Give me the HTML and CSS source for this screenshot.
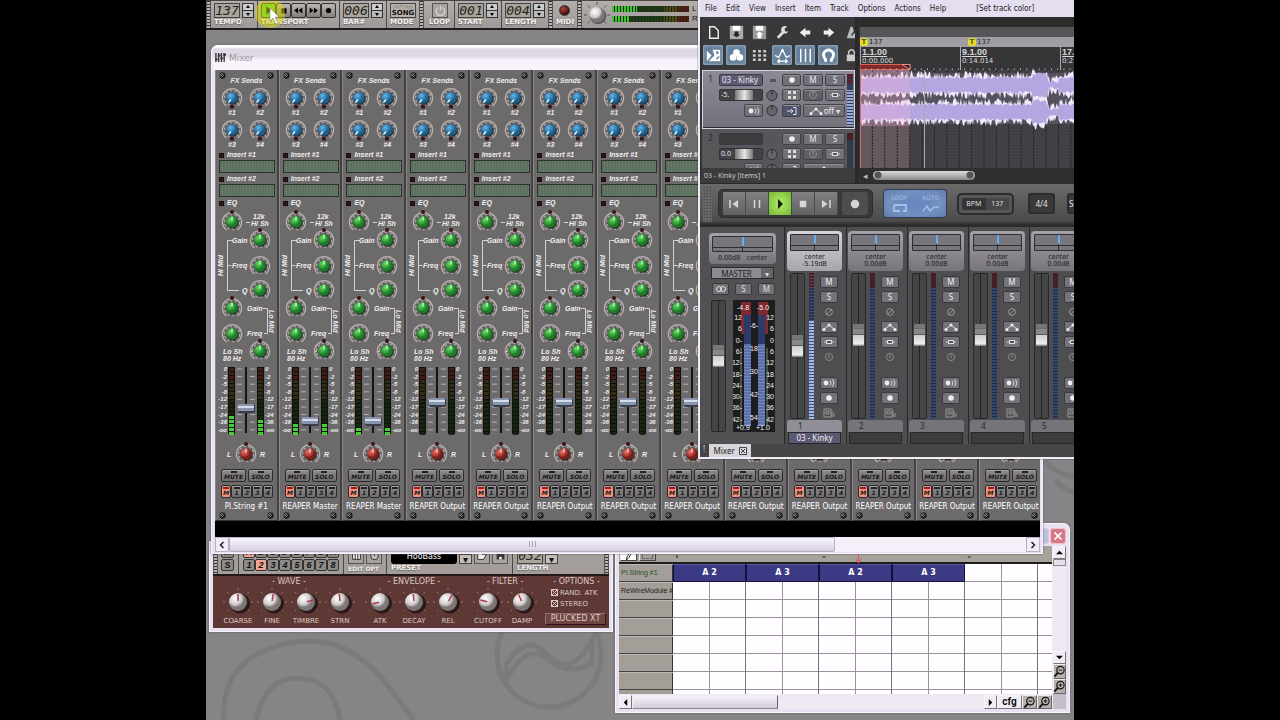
FILE: index.html
```html
<!DOCTYPE html>
<html lang="en">
<head>
<meta charset="utf-8">
<title>Mixer</title>
<link rel="stylesheet" href="styles.css">
</head>
<body>
<svg class="defs" aria-hidden="true">
  <defs>
    <radialGradient id="gBlue" cx="35%" cy="30%"><stop offset="0" stop-color="#6ab4e0"/><stop offset=".7" stop-color="#2f80b4"/><stop offset="1" stop-color="#1f5f8c"/></radialGradient>
    <radialGradient id="gGreen" cx="35%" cy="30%"><stop offset="0" stop-color="#68d868"/><stop offset=".7" stop-color="#2da336"/><stop offset="1" stop-color="#1d7a28"/></radialGradient>
    <radialGradient id="gRed" cx="35%" cy="30%"><stop offset="0" stop-color="#e07a70"/><stop offset=".7" stop-color="#b23a34"/><stop offset="1" stop-color="#7c201c"/></radialGradient>
    <radialGradient id="gWhite" cx="35%" cy="30%"><stop offset="0" stop-color="#fff"/><stop offset=".7" stop-color="#cfcccc"/><stop offset="1" stop-color="#7c7676"/></radialGradient>
    <symbol id="ring" viewBox="0 0 22 22" overflow="visible">
      <path d="M5.500 19A9.600 9.600 0 1 1 16.500 19" fill="none" stroke="#b9b2ae" stroke-width="1.300"/>
      <circle cx="11" cy="11" r="7.300" fill="#5a5757"/>
      <circle cx="11" cy="11" r="7.500" fill="none" stroke="#a5a09d" stroke-width="1.500" stroke-dasharray="2.500 2.200"/>
      <circle cx="12" cy="12" r="5.600" fill="#2a2a2a"/>
    </symbol>
    <symbol id="k-blue" viewBox="0 0 22 22"><use href="#ring"/><circle cx="11" cy="11" r="5.800" fill="url(#gBlue)"/><path d="M10 12.500l-2.500 3" stroke="#fff" stroke-width="1.300"/><rect x="9" y="18" width="4" height="3.500" rx="1" fill="#3c1413"/></symbol>
    <symbol id="k-green" viewBox="0 0 22 22"><use href="#ring"/><circle cx="11" cy="11" r="5.800" fill="url(#gGreen)"/><path d="M11 9.500V5.500" stroke="#dfffdc" stroke-width="1.200"/></symbol>
    <symbol id="k-red" viewBox="0 0 22 22"><use href="#ring"/><circle cx="11" cy="11" r="5.800" fill="url(#gRed)"/><path d="M11 9.500V5.500" stroke="#ffe4dc" stroke-width="1.200"/></symbol>
    <symbol id="screw" viewBox="0 0 8 8"><circle cx="4" cy="4" r="3.600" fill="#1c1c1c"/><circle cx="3.500" cy="3.500" r="2.200" fill="#8e8a88"/><path d="M2 2l4 4M6 2L2.500 5.500" stroke="#111"/></symbol>
    <symbol id="k-white" viewBox="0 0 32 28"><g stroke="#9c7a72"><path d="M16 1v2M5 5l1.500 1.500M27 5l-1.500 1.500M1 15h2M29 15h2M5 24l1-1M27 24l-1-1"/></g><circle cx="18" cy="16.500" r="10" fill="#2b1917"/><circle cx="16" cy="15" r="9" fill="url(#gWhite)"/></symbol>
    <symbol id="mag-out" viewBox="0 0 14 14"><circle cx="8" cy="5.500" r="4" fill="none" stroke="#111" stroke-width="1.200"/><path d="M5 8.500L1.500 12.500" stroke="#111" stroke-width="2"/><path d="M6 5.500h4" stroke="#111"/></symbol>
    <symbol id="mag-in" viewBox="0 0 14 14"><use href="#mag-out"/><path d="M8 3.500v4" stroke="#111"/></symbol>
    <symbol id="env" viewBox="0 0 16 10"><path d="M2.500 7.500L8 3l5.500 4.500" fill="none" stroke="#ddd" stroke-width="1"/><circle cx="3" cy="7.500" r="1.500" fill="#eee"/><circle cx="8" cy="3" r="1.500" fill="#eee"/><circle cx="13" cy="7.500" r="1.500" fill="#eee"/></symbol>
    <symbol id="io" viewBox="0 0 16 10"><path d="M3 5h10" stroke="#ccc"/><rect x="5.500" y="3.500" width="5" height="3" fill="#555" stroke="#ddd"/></symbol>
    <symbol id="input" viewBox="0 0 16 10"><path d="M3 5h6M7 3l2 2-2 2M9 1.500h3v7H9" fill="none" stroke="#dde"/></symbol>
    <symbol id="rec" viewBox="0 0 16 10"><circle cx="8" cy="5" r="2.800" fill="#eee"/></symbol>
    <symbol id="mon" viewBox="0 0 16 10"><circle cx="5" cy="5" r="2.400" fill="#eee"/><path d="M9 2.500q2 2.500 0 5M11.500 1.500q3 3.500 0 7" fill="none" stroke="#ddd"/></symbol>
    <symbol id="fx" viewBox="0 0 16 10"><g fill="#ddd"><rect x="4" y="1" width="3" height="3"/><rect x="9" y="1" width="3" height="3"/><rect x="4" y="6" width="3" height="3"/><rect x="9" y="6" width="3" height="3"/></g></symbol>
    <symbol id="power" viewBox="0 0 16 10"><circle cx="8" cy="5" r="3.600" fill="none" stroke="#8a8a8a"/><path d="M8 2.500v4" stroke="#8a8a8a"/></symbol>
    <symbol id="phase" viewBox="0 0 16 10"><circle cx="8" cy="5" r="3.400" fill="none" stroke="#999"/><path d="M5 8l6-6" stroke="#999"/></symbol>
    <symbol id="route" viewBox="0 0 16 10"><path d="M3 1h7v8H3zM5 3h3v3H5zM11 3v6M13 5v4" fill="none" stroke="#999"/></symbol>
    <symbol id="pot" viewBox="0 0 14 14"><circle cx="7" cy="7" r="5.500" fill="#666369" stroke="#2c2c2f"/><path d="M7 6V2.500" stroke="#222"/></symbol>
  </defs>
</svg>

<main class="desktop">
  <svg class="wallpaper" viewBox="0 0 868 720" preserveAspectRatio="xMinYMin slice" aria-hidden="true">
    <g fill="none" stroke="#747475" stroke-width="5" opacity=".55"><circle cx="343" cy="655" r="52"/><path d="M300 665q20-34 42-10t44-14v22q-22 14-44-4t-42 22zM18 720q-4-60 60-76t110 50l20 26M50 720q10-44 44-42t40 42M836 460q30 25 40 10M850 480q10 16 30 10"/></g>
  </svg>

  <header class="rack">
    <i class="ridge"></i>
    <div class="unit"><div class="line"><output class="lcd">137</output><button class="spin" aria-label="Tempo step"></button></div><span>TEMPO</span></div>
    <i class="sep"></i>
    <div class="unit">
      <div class="line keys">
        <button class="on" aria-label="Play"><svg viewBox="0 0 15 15"><path d="M5 3l6 4.500L5 12z"/></svg></button>
        <button class="near" aria-label="Stop"><svg viewBox="0 0 15 15"><path d="M5 5h6v6H5z"/></svg></button>
        <button aria-label="Rewind"><svg viewBox="0 0 15 15"><path d="M7 4v7L2.500 7.500zM12 4v7L7.500 7.500z"/></svg></button>
        <button aria-label="Forward"><svg viewBox="0 0 15 15"><path d="M3 4v7l4.500-3.500zM8 4v7l4.500-3.500z"/></svg></button>
        <button aria-label="Record"><svg viewBox="0 0 15 15"><circle cx="7.500" cy="7.500" r="3"/></svg></button>
      </div><span>TRANSPORT</span>
      <svg class="halo" viewBox="0 0 34 34" aria-hidden="true"><circle cx="15" cy="15" r="15" fill="#d8dc00" opacity=".5"/><path d="M15 10v13l3-3 3 6 2-1-3-6h4z" fill="#fff" stroke="#777" stroke-width=".5"/></svg>
    </div>
    <i class="sep"></i>
    <div class="unit"><div class="line"><output class="lcd">006</output><button class="spin" aria-label="Bar step"></button></div><span>BAR#</span></div>
    <i class="sep"></i>
    <div class="unit"><div class="line"><button class="mode"><em>PATTRN</em>SONG</button></div><span>MODE</span></div>
    <i class="ridge"></i>
    <div class="unit loop"><div class="line"><button class="square" aria-label="Loop"><svg viewBox="0 0 15 15"><path d="M5 4a5 5 0 1 0 5 0M7.500 2v5" fill="none" stroke="#d8d2cc" stroke-width="1.500"/></svg></button></div><span>LOOP</span></div>
    <i class="sep"></i>
    <div class="unit"><div class="line"><output class="lcd">001</output><button class="spin" aria-label="Start step"></button></div><span>START</span></div>
    <i class="sep"></i>
    <div class="unit"><div class="line"><output class="lcd">004</output><button class="spin" aria-label="Length step"></button></div><span>LENGTH</span></div>
    <i class="ridge"></i>
    <div class="unit midi"><div class="line"><i class="led"></i></div><span>MIDI</span></div>
    <i class="ridge"></i>
    <svg class="gain" viewBox="0 0 28 26"><g stroke="#444"><path d="M14 0v3M4 4l2 2M24 4l-2 2M0 14h3M25 14h3M4 23l2-2M24 23l-2-2"/></g><circle cx="15" cy="15" r="9" fill="#555"/><circle cx="14" cy="14" r="8.500" fill="url(#gWhite)"/></svg>
    <div class="vu"><div><i class="bar left"></i>L</div><div><i class="bar right"></i>R</div></div>
    <i class="ridge"></i>
  </header>

  <section class="win plucked" aria-label="Plucked XT">
    <div class="bank">
      <i class="ridge"></i>
      <div class="pads solo"><button>M</button><button>S</button></div>
      <i class="sep"></i>
      <div class="pads"><button class="hot">A</button><button>B</button><button>C</button><button>D</button><button>E</button><button>F</button><button>G</button><button>H</button><button>1</button><button class="hot">2</button><button>3</button><button>4</button><button>5</button><button>6</button><button>7</button><button>8</button></div>
      <i class="sep"></i>
      <div class="unit"><div class="line"><button class="square" aria-label="Edit"><svg viewBox="0 0 15 15"><path d="M3 3h9v9H3zM6 3v9M9 3v9" fill="#eee" stroke="#222"/></svg></button><button class="square" aria-label="Options"><svg viewBox="0 0 15 15"><circle cx="7.500" cy="8" r="4.500" fill="#bbb" stroke="#222"/><path d="M7.500 8V4" stroke="#222"/></svg></button></div><span class="small">EDIT OPT</span></div>
      <i class="sep"></i>
      <div class="unit preset"><div class="line"><output class="screen">HooBass</output><button class="drop" aria-label="Preset list">▾</button><button class="square" aria-label="Open"><svg viewBox="0 0 15 15"><path d="M2 12V4h4l1 2h5l-3 6z" fill="#eee" stroke="#222"/></svg></button><button class="square" aria-label="Save"><svg viewBox="0 0 15 15"><path d="M3 3h9v9H3z" fill="#333"/><path d="M6 9h3v3H6z" fill="#eee"/></svg></button></div><span>PRESET</span></div>
      <i class="sep"></i>
      <div class="unit"><div class="line"><output class="lcd">032</output><button class="drop" aria-label="Length list">▾</button></div><span>LENGTH</span></div>
      <i class="ridge end"></i>
    </div>
    <div class="synth">
      <fieldset><legend>- WAVE -</legend><div data-knobs="COARSE:0,FINE:8,TIMBRE:75,STRN:-5"></div></fieldset>
      <fieldset><legend>- ENVELOPE -</legend><div data-knobs="ATK:-105,DECAY:-5,REL:30"></div></fieldset>
      <fieldset><legend>- FILTER -</legend><div data-knobs="CUTOFF:-75,DAMP:-25"></div></fieldset>
      <fieldset class="opts"><legend>- OPTIONS -</legend>
        <label><input type="checkbox" checked>RAND. ATK</label>
        <label><input type="checkbox" checked>STEREO</label>
        <button>PLUCKED XT</button>
      </fieldset>
    </div>
  </section>

  <section class="win pattern" aria-label="Playlist">
    <div class="caption"><button class="min" aria-label="Maximize"></button><button class="close" aria-label="Close"><svg viewBox="0 0 16 16"><path d="M4 4l8 8M12 4l-8 8" stroke="#fff" stroke-width="2"/></svg></button></div>
    <div class="sheet">
      <div class="area">
        <div class="ruler"><button class="pen" aria-label="Draw"><svg viewBox="0 0 15 15"><path d="M5 14l1-4 4-7 2 1-4 7z" fill="none" stroke="#111"/></svg></button><button class="sel" aria-label="Select"></button><svg class="marks" viewBox="0 0 378 17" preserveAspectRatio="xMinYMin slice"><path d="M4 9v3M149 11h3M294 11h3" stroke="#222"/><path d="M185 6v11M182 13l3 4 3-4" fill="none" stroke="#e0565c"/></svg></div>
        <div class="rows">
          <div class="names"><span class="green">PI.String #1</span><span>ReWireModule #1</span><span></span><span></span><span></span><span></span><span></span></div>
          <div class="cells"><button>A 2</button><button>A 3</button><button>A 2</button><button>A 3</button></div>
        </div>
        <div class="hbar"><button aria-label="Scroll left"><svg viewBox="0 0 8 8"><path d="M6 0v8L2 4z"/></svg></button><i class="thumb"></i><i class="track"></i><button aria-label="Scroll right"><svg viewBox="0 0 8 8"><path d="M2 0v8l4-4z"/></svg></button><button class="cfg">cfg</button><button class="zoom" aria-label="Zoom out"><svg><use href="#mag-out"/></svg></button><button class="zoom" aria-label="Zoom in"><svg><use href="#mag-in"/></svg></button></div>
      </div>
      <div class="vbar"><button aria-label="Scroll up"><svg viewBox="0 0 8 8"><path d="M0 6h8L4 2z"/></svg></button><i class="thumb"></i><i class="track"></i><button aria-label="Scroll down"><svg viewBox="0 0 8 8"><path d="M0 2h8L4 6z"/></svg></button><button class="zoom" aria-label="Zoom rows out"><svg><use href="#mag-out"/></svg></button><button class="zoom" aria-label="Zoom rows in"><svg><use href="#mag-in"/></svg></button><i class="corner"></i></div>
    </div>
  </section>

  <section class="win mixer" aria-label="Mixer">
    <h1><svg viewBox="0 0 12 12"><path d="M1 1v10M4 1v10M7 1v10M10 1v10" stroke="#333" stroke-width="1.500"/><path d="M0 8h3M3 4h3M6 7h3M9 3h3" stroke="#333" stroke-width="2"/></svg>Mixer</h1>
    <div class="board"><div class="strips" id="strips"></div></div>
    <div class="scroll"><button aria-label="Scroll left"><svg viewBox="0 0 8 8"><path d="M5.500 1L2.500 4l3 3" /></svg></button><i class="thumb"></i><i class="track"></i><button aria-label="Scroll right"><svg viewBox="0 0 8 8"><path d="M2.500 1l3 3-3 3"/></svg></button></div>
  </section>

  <section class="reaper" aria-label="Reaper">
    <nav class="menu"><a href="#">File</a><a href="#">Edit</a><a href="#">View</a><a href="#">Insert</a><a href="#">Item</a><a href="#">Track</a><a href="#">Options</a><a href="#">Actions</a><a href="#">Help</a><a href="#" class="hint">[Set track color]</a></nav>
    <div class="upper">
      <div class="tcp">
        <div class="tools">
          <button aria-label="New"><svg viewBox="0 0 20 20"><path d="M6 4h5l4 4v8H6z" fill="none" stroke="#eee" stroke-width="1.500"/></svg></button>
          <button aria-label="Open"><svg viewBox="0 0 20 20"><rect x="3" y="3" width="14" height="14" fill="#aaa"/><path d="M6 3h8v5H6z" fill="#fff"/><path d="M8 9h4v3h2l-4 3-4-3h2z" fill="#222"/></svg></button>
          <button aria-label="Save"><svg viewBox="0 0 20 20"><rect x="3" y="3" width="14" height="14" fill="#999"/><path d="M6 3h8v5H6z" fill="#fff"/><path d="M10 9l4 3h-2v4H8v-4H6z" fill="#fff"/></svg></button>
          <button aria-label="Settings"><svg viewBox="0 0 20 20"><path d="M5 15.500L11 9.500" stroke="#ddd" stroke-width="3"/><path d="M15 4a4 4 0 1 0 1 5l-3 0-1-3z" fill="#ddd"/></svg></button>
          <button aria-label="Undo"><svg viewBox="0 0 20 20"><path d="M4 10l6-5v3h5v4h-5v3z" fill="#eee"/></svg></button>
          <button aria-label="Redo"><svg viewBox="0 0 20 20"><path d="M16 10l-6-5v3H5v4h5v3z" fill="#eee"/></svg></button>
          <button aria-label="Metronome"><svg viewBox="0 0 20 20"><path d="M5 16L9 4h2l4 12z" fill="#bbb"/><path d="M10 13l6-8" stroke="#333" stroke-width="1.500"/></svg></button>
          <button class="lit" aria-label="Crossfade"><svg viewBox="0 0 20 20"><path d="M3 5l5 5-5 6zM9 4h8v12H5l6-6z" fill="#fff"/><circle cx="14" cy="7" r="1.500" fill="#66809a"/><path d="M13 14l3-3" stroke="#66809a" stroke-width="1.500"/></svg></button>
          <button class="lit" aria-label="Group"><svg viewBox="0 0 20 20"><circle cx="10" cy="7" r="3.500" fill="#fff"/><circle cx="6.500" cy="12" r="3.500" fill="#fff"/><circle cx="13.500" cy="12" r="3.500" fill="#fff"/></svg></button>
          <button aria-label="Grid"><svg viewBox="0 0 20 20"><path d="M3 5.500h14M3 10h14M3 14.500h14" stroke="#ccc" stroke-width="2.500" stroke-dasharray="3 2.500"/></svg></button>
          <button class="lit" aria-label="Envelope move"><svg viewBox="0 0 20 20"><path d="M2 10l4 2 4-8 4 8 4-2M5 16h10M7 14l-2 2 2 2M13 14l2 2-2 2" fill="none" stroke="#fff" stroke-width="1.300"/><circle cx="10" cy="5" r="1.500" fill="#fff"/></svg></button>
          <button class="lit" aria-label="Lines"><svg viewBox="0 0 20 20"><path d="M5 3v14M10 3v14M15 3v14" stroke="#fff" stroke-width="1.500"/></svg></button>
          <button class="lit" aria-label="Snap"><svg viewBox="0 0 20 20"><path d="M7 16.500V14.500Q3 9 6 6q4-3.500 8 0 3 3-1 8.500v2" fill="none" stroke="#fff" stroke-width="3"/></svg></button>
          <button aria-label="Lock"><svg viewBox="0 0 20 20"><rect x="5" y="9" width="10" height="7" fill="#ccc"/><path d="M7 9V6q3-4 6 0v3" fill="none" stroke="#ccc" stroke-width="1.500"/></svg></button>
        </div>
        <div class="tracks" id="tracks"></div>
        <p class="status">03 - Kinky [items] 1</p>
      </div>
      <div class="arrange">
        <div class="band"></div>
        <div class="tempo"><span><b>T</b>137</span><span><b>T</b>137</span></div>
        <div class="time"><div><strong>1.1.00</strong>0:00.000</div><div><strong>9.1.00</strong>0:14.014</div><div><strong>17.</strong>0:2</div><svg class="loopbar" viewBox="0 0 215 6"><path d="M0 .5h50v5H0z" fill="#7e2a28" stroke="#d8645c"/><path d="M42 .5h8v5z" fill="#222" stroke="#e88"/><path d="M5 5.500h210" stroke="#bbb" stroke-width="2" stroke-dasharray="1 5.200"/></svg></div>
        <svg class="wave" id="wave" viewBox="0 0 214 98" preserveAspectRatio="xMinYMin slice"></svg>
        <div class="slider"><span>◂</span><i></i></div>
      </div>
    </div>
    <div class="transport">
      <i class="grip"></i>
      <div class="deck">
        <div class="deckrow">
          <button aria-label="Start"><svg viewBox="0 0 20 20"><path d="M6 6v8"/><path class="solid" d="M14 6v8L8.500 10z"/></svg></button>
          <button aria-label="Pause"><svg viewBox="0 0 20 20"><path d="M7.500 6v8M12.500 6v8"/></svg></button>
          <button class="go" aria-label="Play"><svg viewBox="0 0 20 20"><path d="M8 5v10l5-5z"/></svg></button>
          <button aria-label="Stop"><svg viewBox="0 0 20 20"><path d="M7.500 7.500h5v5h-5z"/></svg></button>
          <button aria-label="End"><svg viewBox="0 0 20 20"><path d="M14 6v8"/><path class="solid" d="M6 6v8l5.500-4z"/></svg></button>
        </div>
        <button class="record" aria-label="Record"><svg viewBox="0 0 20 20"><circle cx="10" cy="10" r="3.500"/></svg></button>
      </div>
      <div class="auto"><button>LOOP<svg viewBox="0 0 20 10"><path d="M4 2h12v6h-3M10 8H4V2" fill="none" stroke="#a4bce6" stroke-width="2"/></svg></button><button>AUTO<svg viewBox="0 0 20 10"><path d="M2 8l4-5 3 5 4-4h5" fill="none" stroke="#a4bce6" stroke-width="1.500"/></svg></button></div>
      <div class="bpm"><span>BPM</span><output>137</output></div>
      <button class="sig">4/4</button>
      <button class="sig next">Se</button>
    </div>
    <div class="mcp">
      <div class="master">
        <div class="pan"><i></i><p><span>0.00dB</span><span>center</span></p></div>
        <div class="mname"><span>MASTER</span><button aria-label="Master menu">▾</button></div>
        <div class="mbtns"><button aria-label="Mono"><svg viewBox="0 0 16 10"><circle cx="6" cy="5" r="2.500"/><circle cx="10" cy="5" r="2.500"/></svg></button><button>S</button><button>M</button></div>
        <div class="mfade"><div class="slot"><i></i></div><svg id="mmeter" viewBox="0 0 42 132"></svg></div>
      </div>
      <div class="chans" id="chans"></div>
    </div>
    <div class="dock"><span>!</span><button>Mixer<svg viewBox="0 0 8 8"><path d="M.5.5h7v7h-7zM2 2l4 4M6 2L2 6" fill="none" stroke="#444"/></svg></button></div>
  </section>
</main>
<script src="app.js"></script>
</body>
</html>
```
FILE: styles.css
```css
*, *::before, *::after { box-sizing: border-box; }
body { margin: 0; background: #000; font: 8px/10px "Liberation Sans", Arial, sans-serif; color: #fff; }
button, input, output, fieldset, legend, h1, p { margin: 0; padding: 0; border: 0; font: inherit; color: inherit; }
button { display: flex; align-items: center; justify-content: center; background: none; }
svg { display: block; flex: none; }
.defs { position: absolute; width: 0; height: 0; }
.desktop { position: relative; max-width: 868px; height: 100vh; min-height: 720px; margin: 0 auto; overflow: hidden; background: #858486; }
.wallpaper { position: absolute; inset: 0; width: 100%; height: 100%; }
.win { position: absolute; background: #e9e1f1; box-shadow: inset 0 0 0 1px #f8f4fc, 0 0 2px #555; }

/* top rack */
.rack { position: relative; display: flex; gap: 2px; width: 493px; height: 30px; overflow: hidden; background: linear-gradient(#b3adab, #9e9896); border-bottom: 2px solid #1d1b1b; border-top: 1px solid #4a4646; }
.ridge { flex: none; width: 5px; background: repeating-linear-gradient(#333 0 1px, #b8b2b0 1px 3px); border: solid #555; border-width: 0 1px; }
.ridge.end { margin-left: auto; }
.sep { flex: none; width: 1px; background: #4b4746; }
.unit { position: relative; flex: none; padding: 2px 1px 0; font: bold 7px/9px "DejaVu Sans", sans-serif; color: #f4f0ee; text-shadow: 0 1px 1px #666; }
.line { display: flex; gap: 2px; height: 15px; }
.unit > span { display: block; white-space: nowrap; }
.lcd { width: 26px; text-align: center; font: italic 13px/14px "DejaVu Sans Mono", monospace; color: #24221f; background: #aaa49a; border: 1px solid #444; text-shadow: none; }
.spin { width: 12px; border: 1px solid #333; background: linear-gradient(#ccc 45%, #333 45% 55%, #bbb 55%); position: relative; }
.spin::before, .spin::after { content: ""; position: absolute; left: 3px; border: 2px solid transparent; }
.spin::before { top: -1px; border-bottom: 3px solid #000; }
.spin::after { bottom: -1px; border-top: 3px solid #000; }
.keys { gap: 0; }
.keys button { width: 15px; border: 1px solid #333; border-radius: 2px; background: linear-gradient(#bbb5b2, #85807e); }
.keys .on { background: #4ed43c; }
.keys svg { width: 13px; height: 13px; }
.halo { position: absolute; left: -5px; top: -3px; width: 34px; height: 34px; }
.mode { flex-direction: column; width: 26px; border: 1px solid #444; background: #b7b0a8; font: bold 7px/7px "DejaVu Sans", sans-serif; color: #111; text-shadow: none; }
.mode em { color: #8b857e; font: 5px/5px "DejaVu Sans", sans-serif; }
.square { width: 16px; border: 1px solid #555; background: #aaa29c; }
.square svg { width: 13px; height: 13px; }
.unit.loop .line { padding-left: 3px; }
.unit.loop { width: 24px; margin-left: 2px; }
.unit.midi { width: 20px; }
.led { width: 11px; height: 11px; margin: 2px 3px; border-radius: 50%; background: radial-gradient(circle at 35% 30%, #a44, #4a0c0c 70%); border: 1px solid #333; }
.gain { width: 26px; height: 26px; }
.vu { display: flex; flex-direction: column; gap: 4px; padding-top: 5px; margin-right: 2px; color: #222; font: 8px/6px "Liberation Sans", sans-serif; }
.vu div { display: flex; gap: 3px; }
.bar { width: 77px; height: 6px; background: repeating-linear-gradient(90deg, transparent 0 2px, #1a2a14 2px 3px), linear-gradient(90deg, #3cc32e 0 32%, #1e3a18 32% 68%, #4d4a16 68% 84%, #5a1a14 84%); }
.bar.right { background: repeating-linear-gradient(90deg, transparent 0 2px, #1a2a14 2px 3px), linear-gradient(90deg, #3cc32e 0 24%, #1e3a18 24% 68%, #4d4a16 68% 84%, #5a1a14 84%); }

/* orion mixer */
.mixer { left: 5px; right: 31px; top: 45px; padding: 0 3px 2px 4px; border-radius: 7px 7px 0 0; }
.mixer h1 { display: flex; align-items: center; gap: 3px; height: 25px; font: 9px/12px "DejaVu Sans", sans-serif; color: #9a949c; border-radius: 6px 6px 0 0; background: linear-gradient(#fff 0 2px, #dfd6e6 4px 11px, #f8f3fb 15px); margin: 0 -2px; padding: 0 2px; }
.mixer h1 svg { width: 11px; height: 11px; }
.board { overflow: hidden; background: #000; padding-bottom: 16px; }
.strips { display: grid; grid-template-columns: repeat(13, 1fr); width: calc(100% + 3px); }
.strip { overflow: hidden; height: 451px; padding: 2px 2px 0 2px; border-right: 2px solid #424041; border-left: 1px solid #8b898a; border-bottom: 1px solid #333; background: #6c6a6b; }
.screws { display: flex; justify-content: space-between; padding: 0 1px; }
.screws svg { width: 7px; height: 7px; }
.fxt, .tag, .sends p { font: italic bold 7px/8px "Liberation Sans", sans-serif; color: #f1eef0; }
.fxt { margin-top: -2px; text-align: center; }
.sends { display: grid; grid-template-columns: 28px 28px; margin: 2px 0 2px 0; row-gap: 2px; text-align: center; }
.sends div { display: grid; justify-items: center; }
.sends svg { width: 22px; height: 22px; }
.tag { display: flex; gap: 3px; align-items: center; padding-left: 1px; }
.tag::before { content: ""; width: 5px; height: 5px; background: #331010; border: 1px solid #1c1111; }
.slotbox { height: 13px; margin: 1px 1px 2px; border: 1px solid #2c332c; background: repeating-linear-gradient(90deg, #5c705e 0 2px, #66796a 2px 3px); width: 56px; }
.strip .fixed { width: 64px; margin-left: -3px; }
.strip text { font: italic bold 7px "Liberation Sans", sans-serif; fill: #f1eef0; }
.strip .scale text { font-size: 6px; }
.keysrow { display: flex; gap: 2px; width: 52px; margin: 3px 0 0 3px; }
.keysrow button { flex: 1; height: 13px; border: 1px solid #2d2b2c; border-radius: 2px; background: linear-gradient(#8d8a8b, #6f6c6e); color: #161616; font: italic bold 6px/8px "DejaVu Sans", sans-serif; padding-top: 3px; position: relative; box-shadow: inset 0 1px #a7a4a5; }
.keysrow button::before { content: ""; position: absolute; top: 1px; width: 6px; height: 2px; background: #222; }
.keysrow.five { gap: 0; }
.keysrow .hot { background: #f1907f; }
.keysrow .hot::before { background: #a81810; }
.cname { margin: 4px -2px 0; text-align: center; font: 8px/10px "DejaVu Sans Condensed", "DejaVu Sans", sans-serif; white-space: nowrap; display: flex; justify-content: center; }
.scroll { display: flex; height: 15px; background: #f4eff8; }
.scroll button, .hbar button, .vbar button { width: 14px; border: 1px solid #b9b1c2; background: #f2ecf7; }
.scroll svg { width: 8px; height: 8px; fill: none; stroke: #222; stroke-width: 1.5; }
.scroll .thumb { flex: 76; border: 1px solid #b5aec0; border-radius: 2px; background: linear-gradient(#fbf8ff, #d5cee0) ; display: flex; }
.scroll .thumb::after { content: ""; width: 7px; height: 6px; margin: 3px auto; background: repeating-linear-gradient(90deg, #aaa3b8 0 1px, transparent 1px 3px); }
.scroll .track { flex: 24; }

/* synth */
.plucked { left: 3px; top: 541px; width: 404px; padding: 4px; }
.bank { display: flex; gap: 3px; height: 31px; background: #a49e9b; border-bottom: 2px solid #241817; }
.bank .unit { padding: 1px 0 0; }
.bank .sep { margin: 0 1px; }
.pads { display: grid; grid-template-columns: repeat(8, 12px); grid-auto-rows: 12px; gap: 1px 0; padding-top: 1px; }
.pads.solo { grid-template-columns: 13px; }
.pads button { border: 1px solid #333; border-radius: 2px; background: #8d8987; color: #111; font: italic bold 9px/10px "Liberation Sans", sans-serif; }
.pads .hot { background: #efa496; }
.bank .line { height: 18px; }
.bank .unit > .small { font-size: 6px; }
.screen { width: 66px; border-radius: 3px; background: #000; color: #fff; text-align: center; font: 8px/21px "DejaVu Sans", sans-serif; text-shadow: none; }
.drop { width: 13px; height: 10px; margin-top: 8px; border: 1px solid #444; background: #c4bebb; color: #111; font-size: 10px; }
.bank .lcd { line-height: 17px; }
.bank .square { height: 18px; }
.synth { display: flex; height: 52px; gap: 6px; padding: 1px 1px 0 8px; background: #5d3834; color: #dccac4; font: 8px/8px "DejaVu Sans", sans-serif; }
.synth fieldset { min-width: 0; }
.synth legend { width: 100%; text-align: center; line-height: 10px; white-space: nowrap; }
.synth fieldset div { display: flex; }
.synth .dial { display: flex; flex-direction: column; align-items: center; width: 34px; white-space: nowrap; }
.dial svg { width: 32px; height: 28px; }
.dial span { margin-top: 2px; font-size: 7px; }
.opts { flex: 1; display: grid; justify-items: start; grid-auto-rows: min-content; white-space: nowrap; }
.opts label { display: flex; align-items: center; gap: 2px; height: 11px; padding-left: 6px; font-size: 7px; }
.opts input { appearance: none; width: 7px; height: 7px; border: 1px solid #dccac4; background: linear-gradient(45deg, transparent 42%, #dccac4 42% 58%, transparent 58%), linear-gradient(-45deg, transparent 42%, #dccac4 42% 58%, transparent 58%); }
.opts button { width: 61px; height: 12px; margin-top: 4px; border: 1px solid #95706b; border-right-color: #2c1513; border-bottom-color: #2c1513; background: #6e4541; font-size: 8px; }

/* playlist */
.pattern { left: 409px; right: 4px; top: 523px; padding: 4px; border-radius: 7px 7px 0 0; }
.caption { display: flex; justify-content: flex-end; gap: 1px; height: 19px; padding-top: 1px; }
.caption button { width: 16px; height: 16px; border-radius: 3px; background: #d9778a; border: 1px solid #f2c2cc; }
.caption .min { background: #b4c2e4; }
.caption svg { width: 14px; height: 14px; }
.sheet { display: grid; grid-template-columns: 1fr 14px; }
.ruler { display: flex; height: 18px; background: #a6a19b; border-bottom: 2px solid #1c1c1c; }
.ruler button { width: 17px; margin: 1px; border: 1px solid #eee; border-right-color: #444; border-bottom-color: #444; background: #a6a19b; }
.ruler .pen { background: #fff; }
.ruler .pen svg { width: 13px; height: 13px; }
.ruler .sel::before { content: ""; width: 11px; height: 10px; border: 1px dashed #666; }
.ruler .marks { flex: 1; height: 17px; margin-left: 16px; min-width: 0; }
.rows { display: grid; grid-template-columns: 54px 1fr; height: 130px; overflow: hidden; color: #222; }
.names { display: grid; grid-auto-rows: 18px; background: #a49e99; border-right: 1px solid #333; }
.names span { padding: 4px 0 0 2px; border-bottom: 1px solid #444; box-shadow: inset 0 1px #bdb8b3; white-space: nowrap; font: 7px/10px "Liberation Sans", sans-serif; }
.names .green { color: #1d5226; }
.cells { display: flex; align-items: flex-start; background: repeating-linear-gradient(90deg, transparent 0 36px, #98949a 36px 37px, transparent 37px 72px, #77747a 72px 73px), repeating-linear-gradient(#fffdff 0 17px, #98949a 17px 18px); }
.cells button { width: 73px; height: 18px; background: #3c3a84; border: 1px solid #12113c; color: #fff; font: bold 8px/10px "DejaVu Sans", sans-serif; border-top-color: #5956a4; }
.hbar { display: flex; height: 15px; background: #efe9f3; padding-top: 1px; }
.hbar button { width: 13px; border-color: #f8f4fb #777 #777 #f8f4fb; }
.hbar svg, .vbar svg { width: 7px; height: 7px; }
.hbar .zoom svg, .vbar .zoom svg { width: 13px; height: 13px; }
.hbar .zoom, .vbar .zoom { background: #b5b0ae; border-color: #eee #666 #666 #eee; }
.hbar .zoom { width: 15px; }
.hbar .cfg { width: 25px; color: #111; font: bold 10px/12px Roboto, sans-serif; }
.hbar .thumb { flex: 145; background: linear-gradient(#f6f1fa, #d4ccdc); border: 1px solid #eee; border-right-color: #666; border-bottom-color: #888; }
.hbar .track { flex: 208; }
.vbar { display: flex; flex-direction: column; background: #efe9f3; padding-left: 1px; }
.vbar button { width: 13px; height: 13px; border-color: #f8f4fb #777 #777 #f8f4fb; }
.vbar .thumb { height: 7px; border: 1px solid #888; background: #e6dfec; }
.vbar .track { flex: 1; }
.vbar .zoom { height: 15px; }
.vbar .corner { height: 15px; background: #c4bcc9; }

/* reaper */
.reaper { position: absolute; left: 492px; right: 0; top: 0; overflow: hidden; border: solid #f0ecf6; border-width: 0 0 2px 2px; box-shadow: 0 0 1px #222; background: #4b4b4d; font: 8px/10px "Noto Sans", "Open Sans", sans-serif; color: #ddd; }
.menu { display: flex; gap: 9px; height: 17px; padding: 3px 5px; background: #e4def0; color: #222; white-space: nowrap; font: 8px/11px "DejaVu Sans Condensed", "DejaVu Sans", sans-serif; }
.menu a { color: inherit; text-decoration: none; }
.menu .hint { margin-left: 21px; }
.upper { display: grid; grid-template-columns: 159px 1fr; grid-template-rows: 166px; }
.tcp { display: flex; flex-direction: column; min-height: 0; background: #333335; border-right: 4px solid #2a2a2c; padding-left: 2px; }
.tools { display: grid; grid-template-columns: repeat(7, 23px); grid-auto-rows: 23px; height: 53px; padding-top: 4px; overflow: hidden; background: #39393b; }
.tools button { width: 20px; height: 20px; margin: 1px; border-radius: 2px; }
.tools svg { width: 19px; height: 19px; }
.tools .lit { background: #66809a; box-shadow: inset 0 0 3px #b9d0e6; }
.tracks { flex: 1; min-height: 0; overflow: hidden; }
.trk { display: grid; grid-template-columns: 13px 44px 15px 19px 20px 20px 7px; grid-template-rows: 12px 12px 13px; gap: 3px 2px; height: 59px; padding: 4px 1px 0 2px; background: #57575a; border-bottom: 2px solid #2b2b2d; color: #e8e8ea; }
.trk.sel { background: linear-gradient(#8c8a96, #73727c); outline: 1px solid #d6d4de; outline-offset: -1px; }
.trk button { border-radius: 2px; background: #737178; border: 1px solid #434247; box-shadow: inset 0 1px #918f97; }
.trk button svg { width: 16px; height: 10px; }
.trk .num { text-align: center; color: #2b2b2e; }
.trk .nm { background: #5d5b73; border: 1px solid #3b3a48; border-radius: 2px; padding-left: 2px; white-space: nowrap; line-height: 10px; }
.trk .dark { background: #3d3d3f; }
.vol { display: flex; background: #444347; border: 1px solid #333; border-radius: 2px; line-height: 10px; overflow: hidden; font-size: 7px; }
.vol span { width: 15px; padding-left: 1px; }
.vol i { width: 18px; background: linear-gradient(90deg, #777, #ddd 48%, #222 50%, #e8e8e8 52%, #777); }
.trk .pot { width: 14px; height: 13px; }
.trk .dim { background: #605e64; }
.trk .meter { grid-column: 7; grid-row: 1 / 4; width: 6px; height: 52px; background: repeating-linear-gradient(transparent 0 2px, #333a55 2px 3px), linear-gradient(#5e1c22 0 20%, #344062 20% 30%, #96aede 30%); }
.trk:not(.sel) .meter { background: linear-gradient(#4e1c20 0 14%, #2c3a4c 14%); }
.trk .midbtn { grid-column: 2; justify-self: end; width: 19px; }
.trk .envb { grid-column: span 2; }
.trk .folder { justify-self: center; align-self: center; width: 6px; height: 3px; background: #555459; }
.trk.sel .route { background: #4f5669; }
.status { flex: none; height: 15px; padding: 3px 2px; color: #c8c8c8; background: #3c3c3d; font-size: 7px; line-height: 9px; }
.arrange { display: flex; flex-direction: column; min-width: 0; min-height: 0; background: #363638; padding-left: 1px; }
.band { flex: none; height: 20px; background: linear-gradient(#2c2c2d 0 10px, #565558 10px); }
.tempo { flex: none; display: grid; grid-template-columns: 108px 1fr; height: 10px; background: #a09ea2; color: #222; font: 7px/11px "DejaVu Sans", sans-serif; }
.tempo b { display: inline-block; width: 8px; height: 8px; margin-right: 1px; border-radius: 2px; background: #e9dc25; color: #553; font: bold 7px/8px "DejaVu Sans", sans-serif; text-align: center; }
.time { flex: none; position: relative; display: grid; grid-template-columns: 100px 100px 100px; height: 23px; overflow: hidden; color: #d8d8da; font: 7px/9px "DejaVu Sans", sans-serif; }
.time div { padding-left: 1px; border-left: 1px solid #aaa; }
.time strong { display: block; height: 10px; font: bold 9px/10px "Liberation Sans", sans-serif; text-decoration: underline; }
.loopbar { position: absolute; left: 0; bottom: 0; width: 215px; height: 6px; }
.wave { flex: none; width: 100%; height: 98px; background: #414145; }
.slider { flex: none; display: flex; gap: 4px; height: 15px; padding: 3px; background: #2f2f30; }
.slider span { font-size: 9px; color: #bbb; }
.slider i { width: 102px; height: 9px; border-radius: 5px; margin-left: 1px; background: radial-gradient(circle at 5px 4px, #555 0 3px, transparent 4px), radial-gradient(circle at 97px 4px, #555 0 3px, transparent 4px), linear-gradient(#ddd, #888); }
.transport { display: flex; align-items: center; gap: 10px; height: 44px; padding: 0 0 4px 3px; background: linear-gradient(#6a6a6b, #4c4c4d 85%, #2c2c2d 95%); border-top: 1px solid #2a2a2a; white-space: nowrap; }
.grip { flex: none; width: 9px; height: 36px; margin-right: -4px; background: radial-gradient(#444 1px, transparent 1px) 0 0/3px 3px, #656566; }
.deck { flex: none; display: flex; gap: 4px; padding: 2px 4px; border-radius: 5px; background: #39393a; border: 1px solid #2c2c2d; }
.deckrow { display: flex; }
.deck button { width: 23px; height: 23px; background: linear-gradient(#808082, #626264); border-right: 1px solid #4a4a4b; }
.deck .go { background: radial-gradient(#b4ee66, #74b838); }
.deck svg { width: 20px; height: 20px; fill: #d6d6d8; stroke: #d6d6d8; stroke-width: 1.5; }
.deck svg .solid { stroke: none; }
.deck .go svg { fill: #10200a; stroke: none; }
.deck .record { width: 26px; border-radius: 3px; background: #4e4e50; }
.auto { flex: none; display: flex; width: 64px; height: 29px; border: 1px solid #2f3d55; border-radius: 3px; background: radial-gradient(#6484be, #7490c0 60%, #5f7baa); color: #a4bce6; font: 6px/7px "DejaVu Sans", sans-serif; }
.auto button { flex: 1; flex-direction: column; gap: 2px; }
.auto svg { width: 20px; height: 10px; }
.bpm { flex: none; display: flex; align-items: center; width: 57px; height: 22px; padding: 3px; border: 2px solid #2c2c2d; border-radius: 5px; background: #57575a; text-align: center; font-size: 7px; line-height: 12px; }
.bpm span { flex: 1; background: #353536; }
.bpm output { flex: 1; background: #47474a; }
.sig { flex: none; width: 27px; height: 21px; margin-left: 4px; border: 2px solid #2c2c2d; border-radius: 3px; background: #39393b; font-size: 8px; color: #e4e4e4; }
.sig.next { margin-left: 2px; justify-content: flex-start; }
.mcp { display: grid; grid-template-columns: 85px 1fr; height: 217px; background: #434345; }
.master { padding: 6px 8px 0 9px; border-right: 1px solid #2a2a2c; background: #515154; }
.pan { padding: 3px; border-radius: 4px; background: linear-gradient(#a4a2a8, #77757b); color: #1c1c1e; text-align: center; font: 7px/7px "DejaVu Sans Condensed", "DejaVu Sans", sans-serif; }
.pan > i { display: block; height: 17px; border: 1px solid #2e2e31; background: linear-gradient(#63aef0, #63aef0) center 0/2px 9px no-repeat, linear-gradient(#2e2e31, #2e2e31) 0 10px/100% 1px no-repeat, linear-gradient(#2e2e31, #2e2e31) center/1px 100% no-repeat, #77767d; border-radius: 1px; }
.pan p { padding-top: 3px; white-space: nowrap; }
.master .pan { height: 31px; }
.master .pan > i { height: 16px; }
.master .pan p { display: flex; justify-content: space-between; padding: 3px 6px 0; }
.mname { display: flex; height: 12px; margin: 3px 2px 0; border: 1px solid #2b2b2d; background: #8d8b91; color: #222; line-height: 11px; font-size: 8px; }
.mname span { flex: 1; text-align: center; }
.mname button { width: 12px; background: #66656a; color: #ddd; font-size: 8px; }
.mbtns { display: flex; justify-content: space-between; margin: 4px 1px 5px 3px; }
.mbtns button { width: 17px; height: 12px; border-radius: 2px; background: #737176; border: 1px solid #3a393c; }
.mbtns svg { width: 16px; height: 10px; fill: none; stroke: #ddd; }
.mfade { display: flex; gap: 7px; padding-left: 2px; }
.slot { position: relative; width: 15px; border: 1px solid #29292b; border-radius: 2px; background: linear-gradient(90deg, #454548 46%, #222 46% 54%, #454548 54%); }
.slot i { position: absolute; left: 1px; right: 1px; top: 44px; height: 22px; border-radius: 1px; background: linear-gradient(#777 0 20%, #444 22%, #888 24% 45%, #333 47%, #ccc 50%, #eee 90%, #777); }
.mfade svg { width: 42px; height: 132px; }
.mfade text { font: 7px "Liberation Sans", sans-serif; fill: #f0f0f0; }
.chans { display: grid; grid-template-columns: repeat(5, 61px); overflow: hidden; padding-left: 1px; }
.chan { display: flex; flex-direction: column; padding: 4px 4px 0 1px; border-right: 1px solid #2a2a2c; background: #4e4e51; }
.chan .pan { height: 40px; }
.chan:first-child .pan { background: linear-gradient(#d6d4da, #a7a5ab); }
.cbody { display: grid; grid-template-columns: 14px 5px 19px; gap: 5px; height: 143px; margin: 2px 0 0 3px; }
.cbody .slot i { top: 50px; }
.chan:first-child .slot i { top: 61px; }
.cmeter { width: 5px; background: repeating-linear-gradient(transparent 0 2px, #202a40 2px 3px), linear-gradient(#5a1a1c 0 10%, #34466e 10%); }
.chan:first-child .cmeter { background: repeating-linear-gradient(transparent 0 2px, #404c74 2px 3px), linear-gradient(#5a1a1c 0 10%, #26344e 10% 32%, #a0b8ea 32%); }
.cbtns { display: flex; flex-direction: column; gap: 3px; margin: 3px 0 0 1px; }
.cbtns button { width: 18px; height: 12px; border-radius: 2px; border: 1px solid #3a393c; background: #74727a; color: #eee; }
.cbtns .flat { background: none; border: 0; }
.cbtns svg { width: 16px; height: 10px; }
.cbtns .gap { margin-top: 11px; }
.cnum { height: 12px; margin-top: 4px; padding-left: 11px; border-radius: 3px 3px 0 0; background: #757479; color: #28282a; line-height: 12px; }
.ctitle { height: 12px; margin: 0 1px; border: 1px solid #29292b; background: #3c3c3e; text-align: center; line-height: 10px; white-space: nowrap; }
.chan:first-child .ctitle { background: #5a5872; color: #eee; }
.chan:first-child .cnum { background: #908e96; }
.dock { display: flex; gap: 4px; height: 13px; padding-left: 3px; background: #464648; }
.dock button { width: 42px; gap: 4px; background: #d7d5dc; color: #222; font-size: 8px; }
.dock svg { width: 8px; height: 8px; }
```
FILE: app.js
```js
const use = (id) => `<svg><use href="#${id}"/></svg>`;
const each = (n, fn) => Array.from({ length: n }, (_, i) => fn(i)).join("");

/* Orion mixer strips */
const knob = (kind, x, y, led) =>
  `<use href="#k-${kind}" x="${x - 11}" y="${y - 11}" width="22" height="22"/>` +
  (led ? `<circle cx="${x}" cy="${y - 10}" r="2" fill="#3c1413"/>` : "");

const eq = `<svg class="fixed" height="156" viewBox="0 0 64 156">
  <g fill="none" stroke="#d6d2d4"><path d="M18 33.500H12.500V83.500H24M12.500 58.500h4M48 101.500h4.500v25H49M31 15.500h4M36 144.500h3"/></g>
  ${knob("green", 17, 15, 1)}${knob("green", 45, 33, 1)}${knob("green", 45, 59)}${knob("green", 45, 83)}
  ${knob("green", 17, 101, 1)}${knob("green", 17, 127)}${knob("green", 45, 144, 1)}
  <text x="38" y="12">12k</text><text x="36" y="19">Hi Sh</text>
  <text x="17" y="36">Gain</text><text x="17" y="61">Freq</text><text x="27" y="86">Q</text>
  <text x="32" y="104">Gain</text><text x="32" y="129">Freq</text>
  <text x="8" y="15" transform="translate(0 54) rotate(-90 8 15)">Hi Mid</text>
  <text x="54" y="103" transform="rotate(90 54 103)">Lo Mid</text>
  <text x="8" y="147">Lo Sh</text><text x="8" y="154">80 Hz</text></svg>`;

const marks = ["0", "-2", "-5", "-8", "-12", "-17", "-24", "-36", "-oo"];
function fader(pos, left, right) {
  const meter = (x, lit) => each(17, (i) => {
    const on = i >= 17 - lit;
    const c = on ? "#45cc36" : i < 3 ? "#421a16" : i < 8 ? "#2f2c12" : "#17260f";
    return `<rect x="${x}" y="${8 + i * 4}" width="5" height="3" fill="${c}"/>`;
  });
  return `<svg class="fixed scale" height="79" viewBox="0 0 64 79">
    <rect x="13" y="4" width="7" height="67" fill="#101010"/><rect x="42" y="4" width="7" height="67" fill="#101010"/>
    <g transform="translate(0 -3)">${meter(14, left)}${meter(43, right)}</g>
    ${marks.map((m, i) => `<text x="12" y="${8 + i * 7.600}" text-anchor="end">${m}</text><text x="50" y="${8 + i * 7.600}">${m}</text><path d="M22 ${6 + i * 7.600}h5M35 ${6 + i * 7.600}h5" stroke="#b4b1b2"/>`).join("")}
    <rect x="30" y="4" width="2" height="66" fill="#141414"/>
    <rect x="23" y="${pos - 4}" width="17" height="9" rx="2" fill="#3a3d48"/>
    <rect x="23" y="${pos - 4}" width="16" height="7" rx="1" fill="#8895b0"/><rect x="23" y="${pos - 2}" width="16" height="2" fill="#d4dcec"/></svg>`;
}

const settings = [[45, 5, 4], [58, 3, 3], [58, 2, 2]];
const screws = `<div class="screws">${use("screw")}${use("screw")}</div>`;
document.getElementById("strips").innerHTML = each(13, (i) => {
  const [pos, l, r] = settings[i] || [39, 0, 0];
  const name = i === 0 ? "PI.String #1" : i < 3 ? "REAPER Master" : "REAPER Output";
  return `<article class="strip">${screws}<p class="fxt">FX Sends</p>
    <div class="sends">${each(4, (k) => `<div>${use("k-blue")}<p>#${k + 1}</p></div>`)}</div>
    <p class="tag">Insert #1</p><div class="slotbox"></div>
    <p class="tag">Insert #2</p><div class="slotbox"></div>
    <p class="tag">EQ</p>${eq}${fader(pos, l, r)}
    <svg class="fixed" height="24" viewBox="0 0 64 24">${knob("red", 31, 12, 1)}<text x="12" y="15">L</text><text x="45" y="15">R</text></svg>
    <div class="keysrow"><button>MUTE</button><button>SOLO</button></div>
    <div class="keysrow five"><button class="hot">M</button><button>1</button><button>2</button><button>3</button><button>4</button></div>
    <p class="cname">${name}</p>${screws}</article>`;
});

/* Synth dials */
document.querySelectorAll("[data-knobs]").forEach((box) => {
  box.innerHTML = box.dataset.knobs.split(",").map((item) => {
    const [label, angle] = item.split(":");
    return `<div class="dial"><svg viewBox="0 0 32 28"><use href="#k-white"/><path d="M16 14V7" stroke="#b03a4c" stroke-width="1.500" transform="rotate(${angle} 16 15)"/></svg><span>${label}</span></div>`;
  }).join("");
});

/* Reaper track panel */
document.getElementById("tracks").innerHTML = ["03 - Kinky", ""].map((name, i) =>
  `<div class="trk ${i ? "" : "sel"}"><span class="num">${i + 1}</span><span class="nm ${i ? "dark" : ""}">${name}</span><i class="folder"></i>
   <button aria-label="Record arm">${use("rec")}</button><button>M</button><button>S</button><i class="meter"></i>
   <span></span><div class="vol"><span>${i ? "0.0" : "-5."}</span><i></i></div><svg class="pot"><use href="#pot"/></svg>
   <button aria-label="Effects">${use("fx")}</button><button class="dim" aria-label="Bypass">${use("power")}</button><button aria-label="Routing">${use("io")}</button>
   <button class="midbtn" aria-label="Monitor">${use("mon")}</button><svg class="pot"><use href="#pot"/></svg><button class="route" aria-label="Input">${use("input")}</button>
   <button class="envb">${use("env")} ${i ? "" : "off ▾"}</button></div>`).join("");

/* Reaper channel strips */
const flat = (id, cls = "") => `<button class="flat ${cls}" aria-label="${id}">${use(id)}</button>`;
const solid = (id, cls = "") => `<button class="${cls}" aria-label="${id}">${use(id)}</button>`;
document.getElementById("chans").innerHTML = each(5, (i) =>
  `<div class="chan"><div class="pan"><i></i><p>center<br>${i ? "0.00dB" : "-5.19dB"}</p></div>
   <div class="cbody"><div class="slot"><i></i></div><i class="cmeter"></i>
   <div class="cbtns"><button>M</button><button>S</button>${flat("phase")}${solid("env")}${solid("io")}${flat("power")}${solid("mon", "gap")}${solid("rec")}${flat("route")}</div></div>
   <p class="cnum">${i + 1}</p><p class="ctitle">${i ? "" : "03 - Kinky"}</p></div>`);

/* Master meter */
const side = ["12", "6", "0-", "6-", "12-", "18-", "24-", "30-", "36-", "42-"];
document.getElementById("mmeter").innerHTML = `<rect width="42" height="132" fill="#1d1d20"/>
  <path d="M8 2h10v32H8zM25 2h10v32H25z" fill="#7c2a2e"/><path d="M11 15h7v29h-7zM25 15h7v29h-7z" fill="#2b3a66"/>
  <path d="M11 44h7v82h-7zM25 44h7v82h-7z" fill="#7088bf"/>
  ${each(27, (i) => `<path d="M11 ${45 + i * 3}h7M25 ${45 + i * 3}h7" stroke="#45588c"/>`)}
  <path d="M8 48v78M34 48v78" stroke="#7a8a6c"/>
  <text x="4" y="10">-4.8</text><text x="24" y="10">-5.0</text>
  ${side.map((t, i) => `<text x="9" y="${20 + i * 11.300}" text-anchor="end">${t}</text><text x="41" y="${20 + i * 11.300}" text-anchor="end">${t.replace("-", "")}</text>`).join("")}
  ${["-6-", "18", "30", "42", "54"].map((t, i) => `<text x="21" y="${28 + i * 23}" text-anchor="middle">${t}</text>`).join("")}
  <text x="3" y="130">+0.9</text><text x="23" y="130">+1.0</text>`;

/* Waveform */
let seed = 7;
const rnd = () => (seed = (seed * 16807) % 2147483647) / 2147483647;
function lane(mid, height, fill, jag) {
  let top = "", bottom = "";
  for (let x = 0; x <= 214; x += 1) {
    const quiet = x > 188 && x < 199 ? 4 : 0;
    const wide = x > 172 && x < 187 ? 4 : 0;
    top += `L${x} ${(mid - height + quiet - wide + rnd() * jag).toFixed(1)}`;
    bottom = `L${x} ${(mid + height - quiet + wide - rnd() * jag).toFixed(1)}` + bottom;
  }
  return `<path d="M0 ${mid}${top}${bottom}Z" fill="${fill}"/>`;
}
document.getElementById("wave").innerHTML = `
  <rect width="50" height="98" fill="#66585f"/>
  ${each(17, (i) => `<path d="M${12.400 * (i + 1)} 0v98" stroke="#222225" stroke-dasharray="2 1"/>`)}
  <rect y="3" width="214" height="51" fill="#55515c"/>
  ${lane(15, 14, "#efeafc", 8)}${lane(42, 14, "#efeafc", 8)}
  ${lane(15, 9, "#b5a6e2", 3)}${lane(42, 9, "#b5a6e2", 3)}
  <rect width="50" height="56" fill="#ffb8d8" opacity=".28"/><rect x="0" width="1" height="98" fill="#d86a70"/>
  <path d="M64.500 0v98" stroke="#a9a9b4"/>`;
```
